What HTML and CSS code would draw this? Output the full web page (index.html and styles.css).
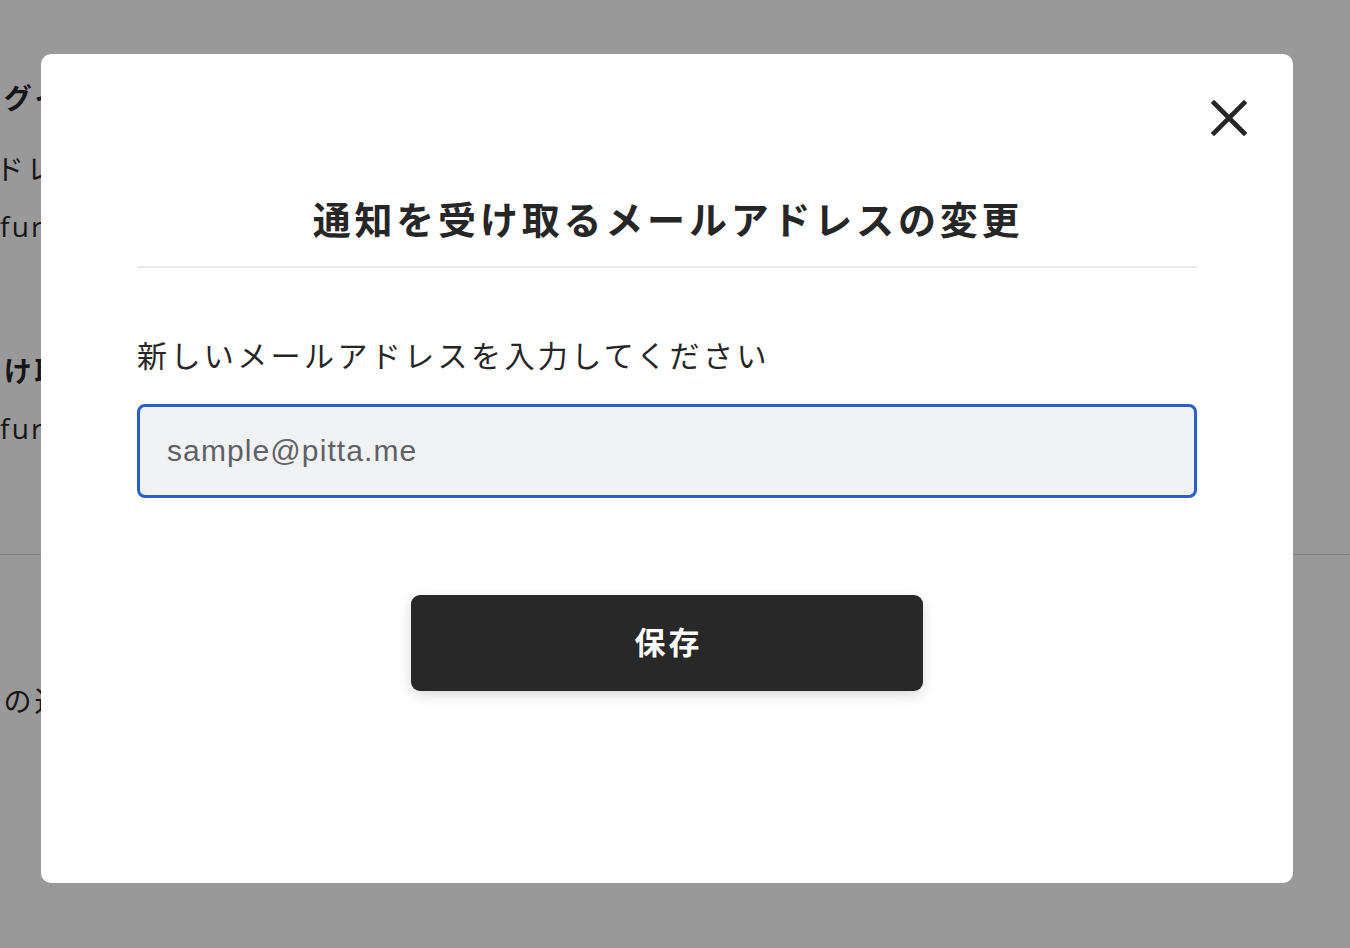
FILE: index.html
```html
<!DOCTYPE html>
<html lang="ja">
<head>
<meta charset="utf-8">
<title>通知を受け取るメールアドレスの変更</title>
<link rel="stylesheet" href="styles.css">
</head>
<body>
<div class="page">
  <div class="bg-section">
    <div class="bg-heading shift-1">ログイン</div>
    <div class="bg-label shift-2">アドレス</div>
    <div class="bg-value">furuta</div>
    <div class="bg-heading shift-1 gap-top">受け取る</div>
    <div class="bg-value">furuta</div>
  </div>
  <div class="bg-divider"></div>
  <div class="bg-section2">
    <div class="bg-label shift-3">通知の送信</div>
  </div>
</div>

<div class="overlay">
  <div class="modal">
    <button class="close" aria-label="閉じる">
      <svg viewBox="0 0 36 36" width="36" height="36">
        <path d="M3 3 L33 33 M33 3 L3 33" stroke="#262626" stroke-width="4.6" stroke-linecap="square" fill="none"/>
      </svg>
    </button>
    <h2 class="title">通知を受け取るメールアドレスの変更</h2>
    <p class="label">新しいメールアドレスを入力してください</p>
    <div class="input">sample@pitta.me</div>
    <div class="actions">
      <button class="save">保存</button>
    </div>
  </div>
</div>
</body>
</html>
```

FILE: styles.css
```css
* { box-sizing: border-box; }
html, body { margin: 0; padding: 0; }
body {
  width: 1350px;
  height: 948px;
  overflow: hidden;
  background: #ffffff;
  font-family: "Noto Sans CJK JP", "Noto Sans", sans-serif;
  color: #262626;
}
.page { padding-top: 77px; }
.bg-heading {
  font-size: 28px;
  font-weight: 700;
  line-height: 40px;
  letter-spacing: 0.1em;
  white-space: nowrap;
}
.bg-label {
  font-size: 28px;
  line-height: 40px;
  letter-spacing: 0.1em;
  white-space: nowrap;
}
.bg-value {
  font-family: "Open Sans", "Noto Sans", sans-serif;
  font-size: 28px;
  line-height: 40px;
  letter-spacing: 0.08em;
  white-space: nowrap;
  margin-top: 18px;
}
.shift-1 { margin-left: -27px; }
.shift-2 { margin-left: -35px; margin-top: 31px; }
.shift-3 { margin-left: -58px; }
.gap-top { margin-top: 104px; }
.bg-divider {
  height: 1px;
  background: #d8d8d8;
  margin-top: 106px;
}
.bg-section2 { padding-top: 125px; }

.overlay {
  position: fixed;
  inset: 0;
  background: rgba(0, 0, 0, 0.4);
  padding: 54px 0 0 41px;
}
.modal {
  position: relative;
  width: 1252px;
  height: 829px;
  background: #ffffff;
  border-radius: 10px;
  padding: 140px 96px 0;
}
.close {
  position: absolute;
  top: 46px;
  right: 46px;
  width: 36px;
  height: 36px;
  padding: 0;
  border: 0;
  background: transparent;
}
.close svg { display: block; }
.title {
  margin: 0;
  text-align: center;
  font-size: 38px;
  font-weight: 700;
  line-height: 48px;
  letter-spacing: 0.1em;
  padding-bottom: 24px;
  padding-left: 2px;
  border-bottom: 2px solid #e8e8e8;
  color: #262626;
}
.label {
  margin: 66px 0 0;
  font-size: 30px;
  line-height: 40px;
  letter-spacing: 3.4px;
  color: #262626;
}
.input {
  margin-top: 30px;
  height: 94px;
  border: 3px solid #2b5fc7;
  border-radius: 8px;
  background: #f1f2f4;
  padding: 0 27px;
  display: flex;
  align-items: center;
  font-family: "Liberation Sans", Arial, sans-serif;
  font-size: 30px;
  letter-spacing: 1.1px;
  color: #5f6166;
}
.actions {
  display: flex;
  justify-content: center;
  margin-top: 97px;
}
.save {
  width: 512px;
  height: 96px;
  border: 0;
  border-radius: 9px;
  background: #282828;
  color: #ffffff;
  font-family: "Noto Sans CJK JP", "Noto Sans", sans-serif;
  font-size: 31px;
  font-weight: 700;
  letter-spacing: 0.1em;
  padding: 0 0 5px 3px;
  box-shadow: 0 4px 14px rgba(0, 0, 0, 0.15);
}
```
